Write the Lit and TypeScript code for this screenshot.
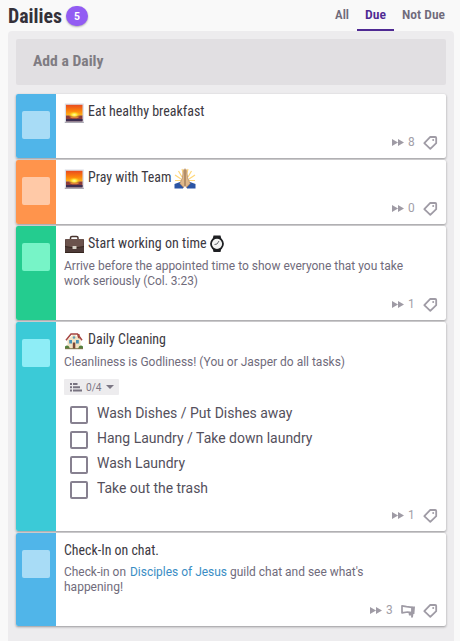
import { LitElement, html, svg, css, nothing } from 'lit';
import { customElement, property } from 'lit/decorators.js';
import { styleMap } from 'lit/directives/style-map.js';

type Run = { text: string; width: number; link?: boolean };
type Task = {
  title: Run;
  before?: string;
  after?: string;
  notes: Run[][];
  checklist?: Run[];
  color: string;
  box: string;
  height: number;
  streak: number;
  challenge?: boolean;
};

const tasks: Task[] = [
  { title: { text: 'Eat healthy breakfast', width: 116.5 }, before: 'sunrise', notes: [], color: '#50b5e9', box: '#a8dcf6', height: 64, streak: 8 },
  { title: { text: 'Pray with Team', width: 83.5 }, before: 'sunrise', after: 'pray', notes: [], color: '#ff944c', box: '#ffc9a7', height: 64, streak: 0 },
  {
    title: { text: 'Start working on time', width: 118.5 }, before: 'briefcase', after: 'watch',
    notes: [
      [{ text: 'Arrive before the appointed time to show everyone that you take', width: 339 }],
      [{ text: 'work seriously (Col. 3:23)', width: 134 }],
    ],
    color: '#24cc8f', box: '#77f4c7', height: 94, streak: 1,
  },
  {
    title: { text: 'Daily Cleaning', width: 78 }, before: 'house',
    notes: [[{ text: 'Cleanliness is Godliness! (You or Jasper do all tasks)', width: 281 }]],
    checklist: [
      { text: 'Wash Dishes / Put Dishes away', width: 195.5 },
      { text: 'Hang Laundry / Take down laundry', width: 215.5 },
      { text: 'Wash Laundry', width: 88 },
      { text: 'Take out the trash', width: 111 },
    ],
    color: '#3bcad7', box: '#8eedf6', height: 209, streak: 1,
  },
  {
    title: { text: 'Check-In on chat.', width: 95 },
    notes: [
      [{ text: 'Check-in on', width: 62 }, { text: 'Disciples of Jesus', width: 97, link: true }, { text: "guild chat and see what's", width: 133.5 }],
      [{ text: 'happening!', width: 59 }],
    ],
    color: '#50b5e9', box: '#a8dcf6', height: 93, streak: 3, challenge: true,
  },
];

const line = (r: Run, cls: string, height: number, base: number) => html`<svg class=${cls} width=${r.width} height=${height}>
  <text x="0" y=${base} textLength=${r.width} lengthAdjust="spacingAndGlyphs">${r.text}</text></svg>`;

const emoji: Record<string, { w: number; art: unknown }> = {
  sunrise: {
    w: 20,
    art: svg`<defs><linearGradient id="sky" x1="0" y1="0" x2="0" y2="1"><stop offset="0" stop-color="#e94b20"/><stop offset=".5" stop-color="#fb7d0c"/><stop offset="1" stop-color="#ffb81c"/></linearGradient>
      <radialGradient id="glow"><stop offset="0" stop-color="#fffbb0"/><stop offset=".4" stop-color="#ffe83a"/><stop offset="1" stop-color="#ffa800" stop-opacity="0"/></radialGradient></defs>
      <path d="M.8 1.500h19V21H.8z" fill="#d9dde5"/><path d="M.8 19.800h19V21H.8z" fill="#aaa8b2"/><path d="M2 2.800h16.500v11H2z" fill="url(#sky)"/>
      <path d="M2 13.500h16.500v5.800H2z" fill="#8a3c3c"/><ellipse cx="10.300" cy="12.800" rx="6" ry="3.600" fill="url(#glow)"/><path d="M5 14.800h11l-3 1.500H8z" fill="#e0853a"/><path d="M2 17h16.500v2.300H2z" fill="#3d2d50"/>`,
  },
  pray: {
    w: 22,
    art: svg`<path d="M4.500 3l3.500 6M1 7l6 4M1 12.500h6M17.500 3L14 9M21 7l-6 4M21 12.500h-6M8 1l1.500 5M14 1l-1.500 5" stroke="#ffd778" stroke-width="1.200"/>
      <path d="M.5 16l5.500-2 4 4-1 2.500H.5zM21.500 16l-5.500-2-4 4 1 2.500h8.500z" fill="#2b55a5"/>
      <path d="M10.800 1c-1 0-1.400 1-1.600 3L8.300 10 5.800 15.500l3.800 4 1.400-2.500 1.400 2.500 3.800-4-2.500-5.500-.9-6c-.2-2-.6-3-1.600-3z" fill="#dfb889" stroke="#a67c57" stroke-width=".6"/><path d="M11 2v15.500" stroke="#7d5b42" stroke-width=".9"/>`,
  },
  briefcase: {
    w: 20,
    art: svg`<path d="M6.500 6V3.800Q6.500 2.500 8 2.500h4.500q1.500 0 1.500 1.300V6" fill="none" stroke="#49352f" stroke-width="1.500"/>
      <rect x="1" y="5" width="19" height="14" rx="1" fill="#4e3b38"/><path d="M1.500 6q0-1 1-1h16q1 0 1 1v6.500q-9 3-18 0z" fill="#6b534d"/><path d="M1 12.500q9.500 3 19 0" fill="none" stroke="#34251f"/><rect x="8.500" y="12" width="4" height="3" rx=".6" fill="#d6d0c5"/><path d="M1 18.500h19" stroke="#35251f"/>`,
  },
  watch: {
    w: 16,
    art: svg`<path d="M4.500 1.500h7l1 4h-9zM4.500 18h7l1-4h-9z" fill="#202124"/><circle cx="8" cy="9.800" r="6" fill="#f3f4f3" stroke="#1d1f22" stroke-width="1.800"/><path d="M8 10l2-3M8 10l-2.500.5" stroke="#676b70" stroke-width="1"/>`,
  },
  house: {
    w: 20,
    art: svg`<path d="M13.500 4h2v5h-2z" fill="#98482f"/><path d="M3.500 10L10 4l6.500 6v9h-13z" fill="#f1e3c4"/><path d="M2 10.200L7 4h6.500L18 10.200" fill="none" stroke="#a64642" stroke-width="1.500"/>
      <path d="M5.200 10h2.800v3.500H5.200zM12 10h2.800v3.500H12z" fill="#4691b5"/><path d="M8.800 12.500h2.500V19H8.800z" fill="#7b4634"/><circle cx="10" cy="7.500" r="1.300" fill="#5f9cb5"/><path d="M1 16.500q2-2 4 0l1 2.500H1zM19 16.500q-2-2-4 0l-1 2.500h5z" fill="#55803d"/><path d="M1 18.700h18" stroke="#80744e"/>`,
  },
};
const drawEmoji = (n?: string, cls = 'emoji') => n ? html`<svg class=${cls} width=${emoji[n].w} height="20" viewBox="0 0 ${emoji[n].w} 20">${emoji[n].art}</svg>` : nothing;

const base = css`
  svg { display: block; flex: none; overflow: visible; }
  .cond { font-family: "Roboto Condensed", Roboto, sans-serif; font-stretch: 75%; }
`;

@customElement('task-card')
export class TaskCard extends LitElement {
  @property({ attribute: false }) task!: Task;
  static styles = [base, css`
    :host { display: block; }
    .card { display: flex; background: #fff; border-radius: 2px; box-shadow: 0 1px 3px #1a181d30, 0 1px 2px #1a181d3c; }
    .control { width: 40px; flex: none; box-sizing: border-box; padding: 17px 6px; border-radius: 2px 0 0 2px; }
    .box { width: 28px; height: 28px; border-radius: 2px; }
    .content { flex: 1; padding: 8px 8px 0; display: flex; flex-direction: column; box-sizing: border-box; }
    .head { display: flex; height: 20px; gap: 4px; }
    .trail { margin-left: -1.500px; }
    .title { font-size: 14.5px; fill: #3c3942; }
    .notes { margin-top: 5px; }
    .linked { margin-top: 4px; }
    .row { display: flex; gap: 3.500px; height: 15px; }
    .note { font: 12px Roboto, sans-serif; fill: #706b7b; }
    .note.link { fill: #3a8dc4; }
    .count { display: flex; align-items: center; width: 55px; height: 16px; margin-top: 9px; background: #edecee; box-sizing: border-box; padding-left: 6px; gap: 4px; border-radius: 1px; }
    .num { font: 10px Roboto, sans-serif; fill: #7b7684; }
    .list { padding: 11px 0 0 6px; display: grid; gap: 7px; }
    .item { display: flex; gap: 9px; height: 18px; }
    .check { width: 18px; height: 18px; box-sizing: border-box; border: 2px solid #878190; border-radius: 2px; }
    .label { font: 14px Roboto, sans-serif; fill: #54505c; }
    .foot { margin-top: auto; height: 24px; display: flex; justify-content: flex-end; }
    .streak { font: 12px Roboto, sans-serif; fill: #a19ea7; margin-left: 4px; }
    .horn { margin-left: 8px; }
    .tag { margin-left: 8px; }
  `];
  render() {
    const t = this.task;
    return html`<div class="card" style=${styleMap({ height: `${t.height}px` })}>
      <div class="control" style=${styleMap({ background: t.color })}><div class="box" style=${styleMap({ background: t.box })}></div></div>
      <div class="content">
        <div class="head">${drawEmoji(t.before)}${line(t.title, 'title cond', 20, 14)}${drawEmoji(t.after, 'emoji trail')}</div>
        ${t.notes.length ? html`<div class=${t.challenge ? 'notes linked' : 'notes'}>${t.notes.map(n => html`<div class="row">${n.map(r => line(r, r.link ? 'note link' : 'note', 15, 11))}</div>`)}</div>` : nothing}
        ${t.checklist ? html`<div class="count">
            <svg width="12" height="9"><path d="M0 0h2v2H0zM3 0h4.500v2H3zM0 3.300h2v2H0zM3 3.300h7v2H3zM0 6.500h2v2H0zM3 6.500h9v2H3z" fill="#787380"/></svg>
            ${line({ text: '0/4', width: 15.5 }, 'num', 16, 11.5)}
            <svg width="8" height="4"><path d="M0 0h8L4 4z" fill="#7c7784"/></svg></div>
          <div class="list">${t.checklist.map(r => html`<div class="item"><div class="check"></div>${line(r, 'label', 18, 12.3)}</div>`)}</div>` : nothing}
        <div class="foot">
          <svg width="12" height="24"><path d="M0 5l6 3.500L0 12zM6 5l6 3.500L6 12z" fill="#9f9ba5"/></svg>
          ${line({ text: String(t.streak), width: 6.7 }, 'streak', 24, 12)}
          ${t.challenge ? html`<svg class="horn" width="14" height="24"><path d="M1 3.800v7l5.500-.8 4.500.6V5.400L5.500 4.700z" fill="none" stroke="#9f9ba5" stroke-width="1.700" stroke-linejoin="round"/><path d="M10.500 4.500H14l-.6 7.500h-1l-.5 3.500H10l.2-2H8l-.6-3 3.100.3z" fill="#9f9ba5"/></svg>` : nothing}
          <svg class="tag" width="15" height="24"><path d="M7.300 2.900L12.200 3Q13.200 3 13.200 4V9.200L7.300 14.800 1.300 9.200z" fill="none" stroke="#9f9ba5" stroke-width="1.800" stroke-linejoin="round"/><circle cx="10.200" cy="6" r="1" fill="#9f9ba5"/></svg>
        </div>
      </div>
    </div>`;
  }
}

@customElement('app-root')
export class AppRoot extends LitElement {
  static styles = [base, css`
    :host { display: block; width: 460px; height: 641px; background: #f9f9f9; overflow: hidden; }
    .header { height: 31px; display: flex; padding: 0 7px 0 8px; }
    .heading { font-size: 20px; font-weight: 700; fill: #34313a; }
    .badge { width: 22px; height: 20px; margin: 6px 0 0 4px; border-radius: 10px; background: #925cf3; box-shadow: 0 1px 2px #1a181d55; display: flex; justify-content: center; }
    .five { font: 700 10px Roboto, sans-serif; fill: #fff; }
    .tabs { margin-left: auto; display: flex; }
    .tab { padding: 0 8px; height: 31px; box-sizing: border-box; }
    .active { border-bottom: 2px solid #4f2a93; }
    .tabtext { font-size: 12.5px; font-weight: 600; fill: #706b7b; }
    .active .tabtext { fill: #4f2a93; }
    .column { box-sizing: border-box; width: 446px; height: 620px; margin-left: 8px; padding: 8px; background: #edecee; border-radius: 4px; }
    .add { height: 46px; background: #e1dfe2; border-radius: 2px; padding-left: 17px; margin-bottom: 9px; }
    .addtext { font-size: 14.5px; font-weight: 700; fill: #7f7c82; }
    .cards { display: grid; gap: 2px; }
  `];
  tab(text: string, width: number, active = false) {
    return html`<div class=${active ? 'tab active' : 'tab'}>${line({ text, width }, 'tabtext cond', 28, 19)}</div>`;
  }
  render() {
    return html`<div class="header">
        ${line({ text: 'Dailies', width: 54 }, 'heading cond', 31, 23)}
        <div class="badge">${line({ text: '5', width: 6 }, 'five', 20, 13.5)}</div>
        <div class="tabs">${this.tab('All', 14)}${this.tab('Due', 21, true)}${this.tab('Not Due', 43)}</div>
      </div>
      <div class="column">
        <div class="add">${line({ text: 'Add a Daily', width: 70.5 }, 'addtext cond', 46, 27.3)}</div>
        <div class="cards">${tasks.map(t => html`<task-card .task=${t}></task-card>`)}</div>
      </div>`;
  }
}
